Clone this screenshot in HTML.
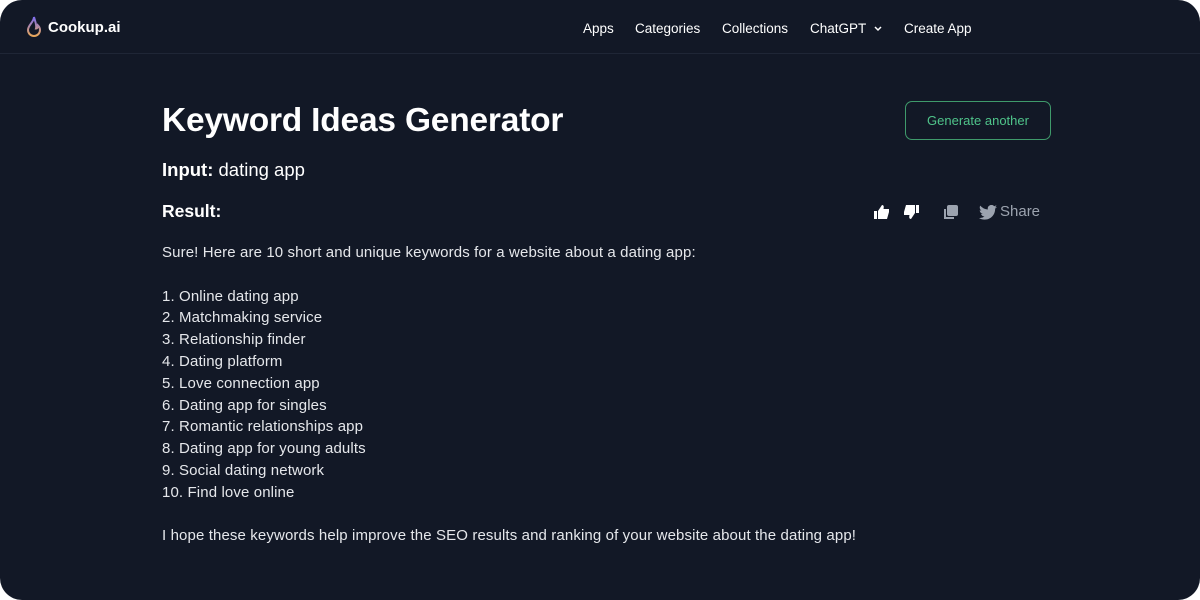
<!DOCTYPE html>
<html><head><meta charset="utf-8"><style>
html,body{margin:0;padding:0;background:#fff;width:1200px;height:600px;overflow:hidden}
.app{position:absolute;left:0;top:0;width:1200px;height:600px;background:#121826;border-radius:22px;overflow:hidden;font-family:"Liberation Sans",sans-serif;color:#e5e7eb}
.hdr{height:53px;border-bottom:1px solid #1f2636;position:relative}
.logo{position:absolute;left:26px;top:16px;display:flex;align-items:center;gap:6px;font-weight:bold;font-size:15px;color:#fff}
.nav{position:absolute;top:21px;font-size:13.5px;color:#fff}
h1{position:absolute;left:162px;top:102px;margin:0;font-size:33.5px;font-weight:bold;color:#fff;letter-spacing:-0.2px}
.btn{position:absolute;left:905px;top:101px;width:144px;height:37px;border:1px solid #3f9a6b;border-radius:7px;color:#4fc38a;font-size:13px;text-align:center;line-height:37px}
.inp{position:absolute;left:162px;top:159px;font-size:18.5px;color:#fff}
.res{position:absolute;left:162px;top:201px;font-size:17.5px;font-weight:bold;color:#fff}
.body{position:absolute;left:162px;top:242px;font-size:15px;letter-spacing:0.12px;line-height:21.8px;color:#e5e7eb}
.ic{position:absolute;top:203px}
</style></head><body><div class="app">
<div class="hdr">
<div class="logo"><svg width="16" height="22" viewBox="0 0 16 22"><defs><linearGradient id="g" x1="0" y1="0" x2="0" y2="1"><stop offset="0" stop-color="#7c6cf0"/><stop offset="1" stop-color="#e8a75a"/></linearGradient></defs><path d="M8 1C8 6 2 9 2 14a6 6 0 0 0 12 0c0-2-1-3.5-2-4.5 0 2-1 3-2 3C11 9 9 5 8 1z" fill="none" stroke="url(#g)" stroke-width="2"/></svg><span>Cookup.ai</span></div>
<span class="nav" style="left:583px">Apps</span>
<span class="nav" style="left:635px">Categories</span>
<span class="nav" style="left:722px">Collections</span>
<span class="nav" style="left:810px">ChatGPT <svg width="10" height="8" viewBox="0 0 10 8" style="margin-left:3px"><path d="M2 2l3 3 3-3" stroke="#fff" stroke-width="1.5" fill="none"/></svg></span>
<span class="nav" style="left:904px">Create App</span>
</div>
<h1>Keyword Ideas Generator</h1>
<div class="btn">Generate another</div>
<div class="inp"><b>Input:</b> dating app</div>
<div class="res">Result:</div>
<svg class="ic" style="left:874px;top:205px" width="16" height="14" viewBox="0 0 16 14"><rect x="0" y="6" width="3" height="8" fill="#fff"/><path d="M4 6l4-6c2 0 2 2 1.5 4H15v3l-2 7H4z" fill="#fff"/></svg>
<svg class="ic" style="left:903px;top:205px" width="16" height="14" viewBox="0 0 16 14"><rect x="13" y="0" width="3" height="8" fill="#fff"/><path d="M12 8l-4 6c-2 0-2-2-1.5-4H1V7l2-7h9z" fill="#fff"/></svg>
<svg class="ic" style="left:943px;top:204px" width="16" height="16" viewBox="0 0 16 16"><rect x="4" y="1" width="11" height="11" rx="2" fill="#9ca3af"/><path d="M2 5v9h9" stroke="#9ca3af" stroke-width="2" fill="none"/></svg>
<svg class="ic" style="left:979px;top:205px" width="18" height="15" viewBox="0 0 24 20"><path d="M24 2.3a10 10 0 0 1-2.8.8A5 5 0 0 0 23.3.4a10 10 0 0 1-3.1 1.2A4.9 4.9 0 0 0 11.8 6 14 14 0 0 1 1.7.9a4.9 4.9 0 0 0 1.5 6.6A4.9 4.9 0 0 1 1 6.9a4.9 4.9 0 0 0 3.9 4.9 5 5 0 0 1-2.2.1 4.9 4.9 0 0 0 4.6 3.4A9.9 9.9 0 0 1 0 17.3 14 14 0 0 0 7.5 19.5c9.1 0 14-7.5 14-14v-.6A10 10 0 0 0 24 2.3z" fill="#9ca3af"/></svg>
<span style="position:absolute;left:1000px;top:203px;font-size:15px;color:#9ca3af">Share</span>
<div class="body">Sure! Here are 10 short and unique keywords for a website about a dating app:<br><br>1. Online dating app<br>2. Matchmaking service<br>3. Relationship finder<br>4. Dating platform<br>5. Love connection app<br>6. Dating app for singles<br>7. Romantic relationships app<br>8. Dating app for young adults<br>9. Social dating network<br>10. Find love online<br><br>I hope these keywords help improve the SEO results and ranking of your website about the dating app!</div>
</div></body></html>
